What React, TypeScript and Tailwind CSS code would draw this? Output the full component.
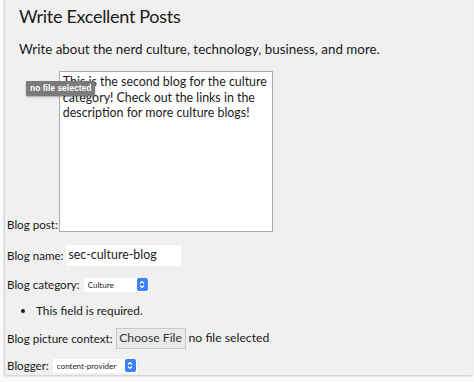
import React from 'react';

function Stepper() {
  return (
    <span className="ml-auto flex h-[13px] w-[11px] flex-col items-center justify-center rounded-[2px] bg-[#3b82f6]">
      <svg width="6" height="9" viewBox="0 0 6 9" fill="none" stroke="white" strokeWidth="1.2">
        <path d="M1 3.5 L3 1.5 L5 3.5" />
        <path d="M1 5.5 L3 7.5 L5 5.5" />
      </svg>
    </span>
  );
}

export default function App() {
  return (
    <div className="h-[382px] w-[474px] bg-[#fafafa] font-['Lato',sans-serif] text-[#1a1a1a]">
      <div className="relative ml-[4px] h-[375px] w-[468px] border-l border-[#d6d6d6] bg-[#f0f0f0] shadow-[0_1px_2px_rgba(0,0,0,0.2)]">
        <div className="pl-[14px] pt-[4px]">
          <h1 className="text-[18px] leading-[24px] tracking-[-0.3px]">Write Excellent Posts</h1>
          <p className="mt-[12px] text-[13.4px] leading-[18px]">
            Write about the nerd culture, technology, business, and more.
          </p>
        </div>

        <div className="mt-[13px] flex items-end pl-[2px]">
          <span className="whitespace-nowrap text-[11.6px] leading-[14px]">Blog post:</span>
          <div className="ml-[1px] h-[161px] w-[214px] border border-[#a9a9a9] bg-white px-[3px] pt-[2px] text-[12.4px] leading-[15.6px]">
            This is the second blog for the culture category! Check out the links in the description for more culture blogs!
          </div>
        </div>

        <div className="mt-[13px] flex items-center pl-[2px]">
          <span className="whitespace-nowrap text-[11.6px]">Blog name:</span>
          <div className="ml-[3px] flex h-[21px] w-[115px] items-center bg-white px-[2px] text-[12.4px]">sec-culture-blog</div>
        </div>

        <div className="mt-[10px] flex items-center pl-[2px]">
          <span className="whitespace-nowrap text-[11.6px]">Blog category:</span>
          <div className="ml-[4px] flex h-[14px] w-[65px] items-center bg-white pl-[4px] pr-[1px] text-[8px]">
            Culture
            <Stepper />
          </div>
        </div>

        <ul className="mt-[9px] list-disc pl-[31px] text-[11.8px]">
          <li>This field is required.</li>
        </ul>

        <div className="mt-[8px] flex items-center pl-[2px]">
          <span className="whitespace-nowrap text-[11.6px]">Blog picture context:</span>
          <div className="ml-[3px] flex h-[21px] w-[70px] items-center justify-center whitespace-nowrap border border-[#c8c8c8] bg-[#eaeaea] text-[12.2px] text-[#333]">
            Choose File
          </div>
          <span className="ml-[3px] whitespace-nowrap text-[12.2px]">no file selected</span>
        </div>

        <div className="mt-[8px] flex items-center pl-[2px]">
          <span className="whitespace-nowrap text-[11.6px]">Blogger:</span>
          <div className="ml-[4px] flex h-[14px] w-[84px] items-center whitespace-nowrap bg-white pl-[4px] pr-[1px] text-[8px]">
            content-provider
            <Stepper />
          </div>
        </div>

        <div className="absolute left-[21px] top-[81px] rounded-[1px] bg-[#7b7b7b] px-[4px] py-[1px] font-['Liberation_Sans',sans-serif] text-[8.5px] font-bold text-white shadow-[0_1px_2px_rgba(0,0,0,0.3)]">
          no file selected
        </div>
      </div>
    </div>
  );
}
